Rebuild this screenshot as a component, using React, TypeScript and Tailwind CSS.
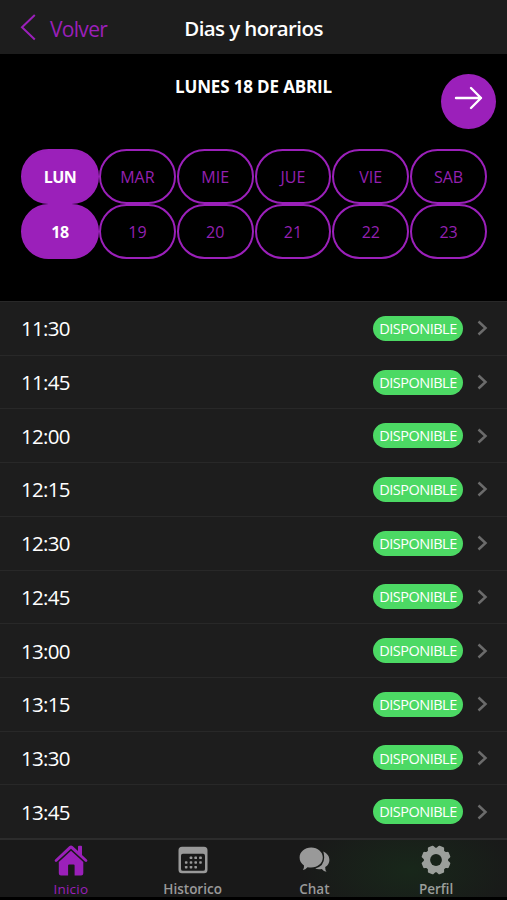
const purple = '#9b20ba';

const days = [
  { name: 'LUN', date: '18', active: true },
  { name: 'MAR', date: '19' },
  { name: 'MIE', date: '20' },
  { name: 'JUE', date: '21' },
  { name: 'VIE', date: '22' },
  { name: 'SAB', date: '23' },
];

const hours = ['11:30', '11:45', '12:00', '12:15', '12:30', '12:45', '13:00', '13:15', '13:30', '13:45'];

function HomeIcon() {
  return (
    <svg width="34" height="32" viewBox="0 0 34 32" fill={purple}>
      <path d="M1.2 15.5 15.2 2.2Q17 .8 18.8 2.2L24 7.1V2.7Q24 1.7 25 1.7h2.1Q28 1.7 28 2.7v8.2l4.8 4.6Q34 16.6 33 17.6q-1 .9-2 0L17 4.8 3 17.6q-1 .9-2 0-.9-1 .2-2.1Z" />
      <path d="M17 6.8 29.3 18v11.2q0 2.2-2.2 2.2h-6.5V21.6q0-1-1-1h-4.500q-1 0-1 1v9.800H7q-2.200 0-2.200-2.200V18Z" />
    </svg>
  );
}

function CalendarIcon() {
  const dots = [
    [13, 11.8], [17.7, 11.8], [22.5, 11.8],
    [8.2, 16.5], [13, 16.5], [17.7, 16.5], [22.5, 16.5],
    [8.2, 21.2], [13, 21.2], [17.7, 21.2],
  ];
  return (
    <svg width="30" height="28" viewBox="0 0 30 28" fill="#999999">
      <path fillRule="evenodd" d="M4 .8h22q3.500 0 3.500 3.500v19.400q0 3.500-3.500 3.500H4Q.5 27.200.5 23.700V4.300Q.5.8 4 .8ZM4.900 7.800Q3 7.800 3 9.700V22.900q0 1.900 1.900 1.900h20.200q1.900 0 1.900-1.900V9.700q0-1.900-1.900-1.900Z" />
      {dots.map(([x, y]) => (
        <rect key={`${x}-${y}`} x={x - 1.3} y={y - 1.3} width="2.600" height="2.600" rx=".7" />
      ))}
    </svg>
  );
}

function ChatIcon() {
  return (
    <svg width="31" height="26" viewBox="0 0 31 26" fill="#999999">
      <path d="M12.200.6C18.800.6 23.800 5 23.800 10.600S18.800 20.600 12.200 20.600q-1.900 0-3.700-.4Q6.500 22.600 3.800 23.100q1.500-2 1.200-4.600Q.6 15.600.6 10.600C.6 5 5.600.6 12.200.6Z" />
      <path d="M24.300 4.400C28.100 6.100 30.400 9 30.400 13q0 4.400-4.200 7.100-.2 2.700 1.300 4.700-2.800-.4-4.700-2.900-3.700.8-6.600-.4 9-2.200 9-10.900 0-3.400-.9-6.200Z" />
    </svg>
  );
}

function GearIcon() {
  return (
    <svg width="30" height="30" viewBox="-15 -15 30 30" fill="#9b9f9b">
      <defs>
        <mask id="gear-hole">
          <rect x="-15" y="-15" width="30" height="30" fill="white" />
          <circle r="5.900" fill="black" />
        </mask>
      </defs>
      <g mask="url(#gear-hole)">
        <circle r="11.900" />
        {[22.5, 67.5, 112.5, 157.5, 202.5, 247.5, 292.5, 337.5].map((a) => (
          <path key={a} transform={`rotate(${a})`} d="M-5.200-10.500Q-3.600-11.500-3.200-13.500-3-14.600-2-14.600H2Q3-14.600 3.200-13.500 3.600-11.500 5.200-10.500L4-7H-4Z" />
        ))}
      </g>
    </svg>
  );
}

const tabs = [
  { label: 'Inicio', icon: <HomeIcon />, style: 'text-[#9b20ba] font-medium tracking-[0.2px]' },
  { label: 'Historico', icon: <CalendarIcon />, style: 'text-[#999999] font-semibold' },
  { label: 'Chat', icon: <ChatIcon />, style: 'text-[#999999] font-semibold' },
  { label: 'Perfil', icon: <GearIcon />, style: 'text-[#9b9f9b] font-semibold' },
];

export default function App() {
  return (
    <div className="flex h-[900px] w-[507px] flex-col overflow-hidden bg-black font-['Open_Sans','Noto_Sans',sans-serif] text-white">
      <header className="grid h-[54px] shrink-0 grid-cols-[1fr_auto_1fr] items-center bg-[#1d1d1d]">
        <button className="flex items-center gap-[13px] pl-[20px] text-[#9b20ba]">
          <svg width="17" height="28" viewBox="0 0 17 28" fill="none" stroke="currentColor" strokeWidth="2">
            <path d="M14.800 2 2 14.300 14.800 26.500" />
          </svg>
          <span className="pt-[3px] text-[21px] leading-7 tracking-[-0.7px]">Volver</span>
        </button>
        <h1 className="pt-[2px] text-[20.5px] font-semibold leading-7 tracking-[-0.6px]">Dias y horarios</h1>
      </header>

      <section className="flex h-[247px] shrink-0 flex-col">
        <div className="grid h-[94.5px] grid-cols-[1fr_auto_1fr] items-start">
          <h2 className="col-start-2 pt-[21px] text-[17px] font-bold leading-6 tracking-[-0.15px]">LUNES 18 DE ABRIL</h2>
          <button className="mt-[20px] mr-[11px] flex size-[55px] justify-center justify-self-end rounded-full bg-[#9b20ba] pt-[12px]">
            <svg width="29" height="24" viewBox="0 0 29 24" fill="none" stroke="white" strokeWidth="2.400" strokeLinecap="round" strokeLinejoin="round">
              <path d="M2 12H27M17 2 27 12 17 22" />
            </svg>
          </button>
        </div>
        <div className="mr-[19px] ml-[21px] grid grid-cols-[78px_repeat(5,1fr)] text-[16px]">
          {days.map((d) => (
            <div key={d.name} className={d.active ? 'font-bold tracking-[-0.5px] text-white' : 'pr-[1px] font-medium text-[#9420b1]'}>
              {[d.name, d.date].map((t) => (
                <div
                  key={t}
                  className={`flex h-[55px] items-center justify-center rounded-full border-2 border-[#9b20ba] pt-[2px] ${d.active ? 'bg-[#9b20ba]' : ''}`}
                >
                  {t}
                </div>
              ))}
            </div>
          ))}
        </div>
      </section>

      <main className="flex h-[537px] shrink-0 flex-col bg-[#1d1d1d]">
        {hours.map((h) => (
          <div key={h} className="flex flex-1 items-center border-t border-[#282828] pr-[19px] pl-[21px]">
            <span className="flex-1 text-[20.500px] leading-7 tracking-[-0.7px]">{h}</span>
            <span className="flex h-[25px] w-[90px] items-center justify-center rounded-full bg-[#4cd964] pt-px text-[14.500px] tracking-[-0.5px]">DISPONIBLE</span>
            <svg className="ml-[14px]" width="11" height="16" viewBox="0 0 11 16" fill="none" stroke="#6b6b6b" strokeWidth="2.500">
              <path d="M1.500 1.500 8.500 8 1.500 14.500" />
            </svg>
          </div>
        ))}
      </main>

      <nav className="grid h-[59px] shrink-0 grid-cols-4 border-t-2 border-[#2c2c2c] bg-[#191919] bg-[radial-gradient(ellipse_110px_60px_at_410px_30px,#18271a,#191919)] pr-[10px] pl-[10px]">
        {tabs.map((t) => (
          <button key={t.label} className="flex flex-col items-center">
            <span className="flex h-[38px] items-center pt-[2px]">{t.icon}</span>
            <span className={`pt-px text-[13.500px] leading-[20px] ${t.style}`}>{t.label}</span>
          </button>
        ))}
      </nav>
    </div>
  );
}
